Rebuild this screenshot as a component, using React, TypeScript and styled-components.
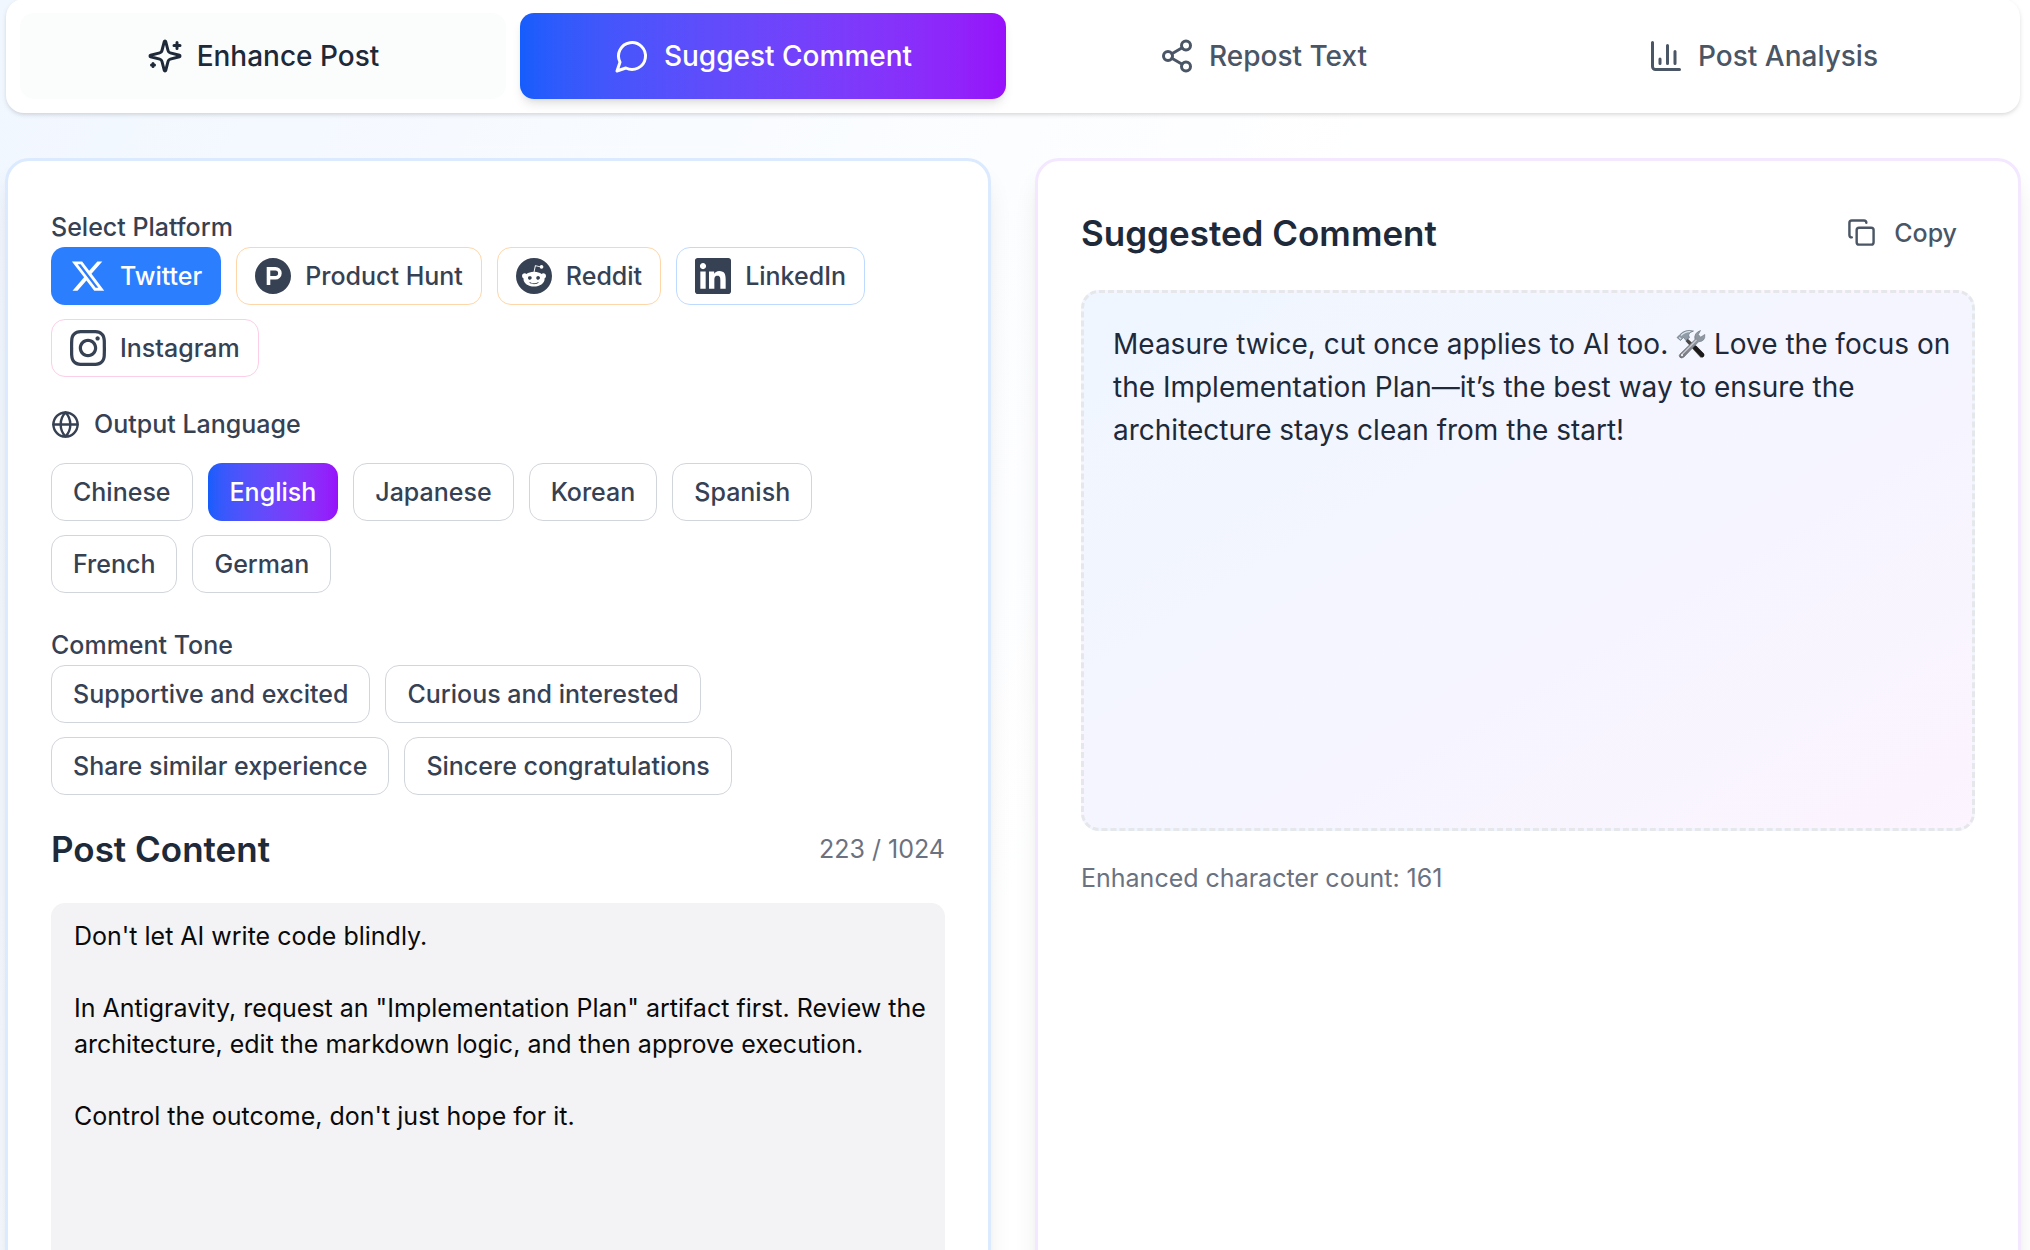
import React, { useState } from "react";
import styled, { createGlobalStyle, css } from "styled-components";

const GlobalStyle = createGlobalStyle`
  *, *::before, *::after { box-sizing: border-box; }
  body {
    margin: 0;
    min-height: 100vh;
    overflow: hidden;
    font-family: Inter, "Liberation Sans", sans-serif;
    -webkit-font-smoothing: antialiased;
    color: #1e2939;
    background: linear-gradient(115deg, #f1f7ff, #ffffff 55%);
  }
  button, textarea { font: inherit; }
`;

const accent = "linear-gradient(to right in oklab, #155dfc, #9810fa)";

const Page = styled.main`
  display: flex;
  flex-direction: column;
  gap: 45px;
  height: 100vh;
  padding: 0 10px 0 6px;
`;

const TabBar = styled.nav`
  display: grid;
  grid-template-columns: repeat(4, 1fr);
  gap: 14px;
  flex: none;
  margin-top: -1px;
  padding: 14px;
  background: #ffffff;
  border-radius: 18px;
  box-shadow: 0 2px 5px rgba(0, 0, 0, 0.1), 0 2px 4px -2px rgba(0, 0, 0, 0.1);
`;

const Tab = styled.button<{ $state: "active" | "hover" | "idle" }>`
  display: flex;
  align-items: center;
  justify-content: center;
  gap: 14px;
  height: 86px;
  padding: 0;
  border: 0;
  border-radius: 14px;
  background: transparent;
  color: #4a5565;
  font-size: 28px;
  font-weight: 500;
  cursor: pointer;
  ${(p) =>
    p.$state === "hover" &&
    css`
      background: #fbfdfd;
      color: #1e2939;
    `}
  ${(p) =>
    p.$state === "active" &&
    css`
      background: ${accent};
      color: #ffffff;
      box-shadow: 0 7px 11px -2px rgba(0, 0, 0, 0.1), 0 4px 7px -4px rgba(0, 0, 0, 0.1);
    `}
`;

const Columns = styled.div`
  display: grid;
  grid-template-columns: repeat(2, minmax(0, 1fr));
  gap: 44px;
  margin: 0 -1px;
`;

const Card = styled.section<{ $edge: string }>`
  display: flex;
  flex-direction: column;
  gap: 29px;
  padding: 43px;
  background: #ffffff;
  border: 3px solid ${(p) => p.$edge};
  border-radius: 24px;
  box-shadow: 0 18px 27px -5px rgba(0, 0, 0, 0.1), 0 7px 11px -7px rgba(0, 0, 0, 0.1);
`;

const Field = styled.div`
  display: flex;
  flex-direction: column;
`;

const FieldLabel = styled.div<{ $spaced?: boolean }>`
  display: flex;
  align-items: center;
  gap: 14px;
  height: ${(p) => (p.$spaced ? "36px" : "43px")};
  margin-bottom: ${(p) => (p.$spaced ? "21px" : "0")};
  padding-top: ${(p) => (p.$spaced ? "0" : "3px")};
  color: #364153;
  font-size: 25px;
  font-weight: 500;
`;

const Choices = styled.div`
  display: flex;
  flex-wrap: wrap;
  gap: 14px 15px;
`;

const Choice = styled.button<{ $edge?: string; $fill?: string; $icon?: boolean }>`
  display: flex;
  align-items: center;
  gap: ${(p) => (p.$icon ? "14px" : "0")};
  height: 58px;
  padding: 0 ${(p) => (p.$icon ? "18px" : "21px")};
  border: 1px solid ${(p) => p.$edge || "#d1d5dc"};
  border-radius: 14px;
  background: #ffffff;
  color: #364153;
  font-size: 25px;
  font-weight: 500;
  white-space: nowrap;
  cursor: pointer;
  ${(p) =>
    p.$fill &&
    css`
      border-color: transparent;
      background: ${p.$fill} border-box;
      color: #ffffff;
    `}
`;

const Header = styled.header<{ $height: number }>`
  display: flex;
  align-items: center;
  justify-content: space-between;
  height: ${(p) => p.$height}px;
`;

const Title = styled.h2`
  margin: 0;
  color: #1e2939;
  font-size: 35px;
  font-weight: 600;
`;

const Muted = styled.span`
  color: #6a7282;
  font-size: 25px;
  line-height: 36px;
`;

const CopyButton = styled.button`
  display: flex;
  align-items: center;
  gap: 18px;
  height: 57px;
  padding: 0 18px;
  border: 0;
  border-radius: 14px;
  background: transparent;
  color: #4a5565;
  font-size: 25px;
  font-weight: 500;
  cursor: pointer;
`;

const PostInput = styled.textarea`
  display: block;
  width: 100%;
  height: 440px;
  padding: 15px 18px 15px 23px;
  border: 0;
  border-radius: 14px;
  outline: 0;
  resize: none;
  background: #f3f3f5;
  color: #0a0a0a;
  font-size: 25px;
  line-height: 36px;
`;

const Result = styled.div`
  min-height: 541px;
  padding: 30px 14px 30px 29px;
  border: 3px dashed #e5e7eb;
  border-radius: 18px;
  background: linear-gradient(to bottom right in oklab, #eff6ff, #f5f5ff 55%, #fcf4ff);
  color: #1e2939;
  font-size: 28px;
  line-height: 43px;

  p { margin: 0; }
`;

const Glyph = styled.svg<{ $size: number }>`
  flex: none;
  width: ${(p) => p.$size}px;
  height: ${(p) => p.$size}px;
`;

const Emoji = styled.svg`
  width: 30px;
  height: 30px;
  vertical-align: -5px;
`;

function Line({ size, children }: { size: number; children: React.ReactNode }) {
  return (
    <Glyph
      $size={size}
      viewBox="0 0 24 24"
      fill="none"
      stroke="currentColor"
      strokeWidth="2"
      strokeLinecap="round"
      strokeLinejoin="round"
      aria-hidden="true"
    >
      {children}
    </Glyph>
  );
}

function Brand({ d }: { d: string }) {
  return (
    <Glyph $size={36} viewBox="0 0 24 24" fill="currentColor" aria-hidden="true">
      <path d={d} />
    </Glyph>
  );
}

function ToolsEmoji() {
  return (
    <Emoji viewBox="0 0 30 30" role="img" aria-label="hammer and wrench">
      <defs>
        <linearGradient id="steel" x1="0" y1="1" x2="1" y2="0">
          <stop offset="0" stopColor="#75727a" />
          <stop offset="0.5" stopColor="#8b8f97" />
          <stop offset="1" stopColor="#93a0ab" />
        </linearGradient>
      </defs>
      <path d="M11.5 9.5 L27.5 24.5 Q29 27 26.5 28.5 L24.5 28.5 L9.5 12 Z" fill="#4a4442" />
      <path d="M19 18.5 L26.3 26" stroke="#1b1919" strokeWidth="4.2" strokeLinecap="round" />
      <path
        d="M4 25 L19 10.5 Q17.5 4 24.5 1.5 L22.3 5.5 L24.6 8.2 L28.8 5.5 Q29.5 12.5 22.5 12.8 L8 28 Q5.5 30 3.8 28.2 Q2.4 26.8 4 25Z"
        fill="url(#steel)"
        stroke="#66707a"
        strokeWidth="0.6"
      />
      <path d="M6 25.5 L20.5 11" stroke="#c9c9d0" strokeWidth="1.2" />
      <circle cx="6" cy="26.2" r="1.1" fill="#f1f2f6" />
      <path
        d="M1 8.5 L4 5.5 Q9 0 17.5 2 Q13 3.5 12.5 6 L13.5 8.5 L10 11.5 L7.5 8.5 L4.5 11.5 Z"
        fill="#8f9ba7"
        stroke="#5e6974"
        strokeWidth="0.6"
      />
      <path d="M5 6.5 Q9.5 2 14.5 2.6 M3.2 8.4 L5 10" stroke="#d7e4ee" strokeWidth="1.3" fill="none" />
    </Emoji>
  );
}

const tabs = [
  {
    name: "Enhance Post",
    icon: (
      <>
        <path d="M9.937 15.5A2 2 0 0 0 8.5 14.063l-6.135-1.582a.5.5 0 0 1 0-.962L8.5 9.936A2 2 0 0 0 9.937 8.5l1.582-6.135a.5.5 0 0 1 .963 0L14.063 8.5A2 2 0 0 0 15.5 9.937l6.135 1.581a.5.5 0 0 1 0 .964L15.5 14.063a2 2 0 0 0-1.437 1.437l-1.582 6.135a.5.5 0 0 1-.963 0z" />
        <path d="M20 3v4M22 5h-4M4 17v2M5 18H3" />
      </>
    ),
  },
  { name: "Suggest Comment", icon: <path d="M7.9 20A9 9 0 1 0 4 16.1L2 22Z" /> },
  {
    name: "Repost Text",
    icon: (
      <>
        <circle cx="18" cy="5" r="3" />
        <circle cx="6" cy="12" r="3" />
        <circle cx="18" cy="19" r="3" />
        <path d="M8.59 13.51l6.83 3.98M15.41 6.51l-6.82 3.98" />
      </>
    ),
  },
  {
    name: "Post Analysis",
    icon: <path d="M3 3v16a2 2 0 0 0 2 2h16M18 17V9M13 17V5M8 17v-3" />,
  },
];

const platforms = [
  {
    name: "Twitter",
    edge: "#2b7fff",
    d: "M18.244 2.25h3.308l-7.227 8.26 8.502 11.24H16.17l-5.214-6.817L4.99 21.75H1.68l7.73-8.835L1.254 2.25H8.08l4.713 6.231zm-1.161 17.52h1.833L7.084 4.126H5.117z",
  },
  {
    name: "Product Hunt",
    edge: "#ffd6a7",
    d: "M13.604 8.4h-3.405V12h3.405a1.8 1.8 0 0 0 0-3.6zM12 0C5.372 0 0 5.372 0 12s5.372 12 12 12 12-5.372 12-12S18.628 0 12 0zm1.604 14.4h-3.405V18H7.801V6h5.804a4.2 4.2 0 0 1 0 8.4z",
  },
  {
    name: "Reddit",
    edge: "#ffd6a7",
    d: "M12 0A12 12 0 0 0 0 12a12 12 0 0 0 12 12 12 12 0 0 0 12-12A12 12 0 0 0 12 0zm5.01 4.744c.688 0 1.25.561 1.25 1.249a1.25 1.25 0 0 1-2.498.056l-2.597-.547-.8 3.747c1.824.07 3.48.632 4.674 1.488.308-.309.73-.491 1.207-.491.968 0 1.754.786 1.754 1.754 0 .716-.435 1.333-1.01 1.614a3.111 3.111 0 0 1 .042.52c0 2.694-3.13 4.87-7.004 4.87-3.874 0-7.004-2.176-7.004-4.87 0-.183.015-.366.043-.534A1.748 1.748 0 0 1 4.028 12c0-.968.786-1.754 1.754-1.754.463 0 .898.196 1.207.49 1.207-.883 2.878-1.43 4.744-1.487l.885-4.182a.342.342 0 0 1 .14-.197.35.35 0 0 1 .238-.042l2.906.617a1.214 1.214 0 0 1 1.108-.701zM9.25 12C8.561 12 8 12.562 8 13.25c0 .687.561 1.248 1.25 1.248.687 0 1.248-.561 1.248-1.249 0-.688-.561-1.249-1.249-1.249zm5.5 0c-.687 0-1.248.561-1.248 1.25 0 .687.561 1.248 1.249 1.248.688 0 1.249-.561 1.249-1.249 0-.687-.562-1.249-1.25-1.249zm-5.466 3.99a.327.327 0 0 0-.231.094.33.33 0 0 0 0 .463c.842.842 2.484.913 2.961.913.477 0 2.105-.056 2.961-.913a.361.361 0 0 0 .029-.463.33.33 0 0 0-.464 0c-.547.533-1.684.73-2.512.73-.828 0-1.979-.196-2.512-.73a.326.326 0 0 0-.232-.095z",
  },
  {
    name: "LinkedIn",
    edge: "#bedbff",
    d: "M20.447 20.452h-3.554v-5.569c0-1.328-.027-3.037-1.852-3.037-1.853 0-2.136 1.445-2.136 2.939v5.667H9.351V9h3.414v1.561h.046c.477-.9 1.637-1.85 3.37-1.85 3.601 0 4.267 2.37 4.267 5.455v6.286zM5.337 7.433c-1.144 0-2.063-.926-2.063-2.065 0-1.138.92-2.063 2.063-2.063 1.14 0 2.064.925 2.064 2.063 0 1.139-.925 2.065-2.064 2.065zm1.782 13.019H3.555V9h3.564v11.452zM22.225 0H1.771C.792 0 0 .774 0 1.729v20.542C0 23.227.792 24 1.771 24h20.451C23.2 24 24 23.227 24 22.271V1.729C24 .774 23.2 0 22.222 0h.003z",
  },
  {
    name: "Instagram",
    edge: "#fccee8",
    d: "M12 2.163c3.204 0 3.584.012 4.85.07 3.252.148 4.771 1.691 4.919 4.919.058 1.265.069 1.645.069 4.849 0 3.205-.012 3.584-.069 4.849-.149 3.225-1.664 4.771-4.919 4.919-1.266.058-1.644.07-4.85.07-3.204 0-3.584-.012-4.849-.07-3.26-.149-4.771-1.699-4.919-4.92-.058-1.265-.07-1.644-.07-4.849 0-3.204.013-3.583.07-4.849.149-3.227 1.664-4.771 4.919-4.919 1.266-.057 1.645-.069 4.849-.069zm0-2.163c-3.259 0-3.667.014-4.947.072-4.358.2-6.78 2.618-6.98 6.98-.059 1.281-.073 1.689-.073 4.948 0 3.259.014 3.668.072 4.948.2 4.358 2.618 6.78 6.98 6.98 1.281.058 1.689.072 4.948.072 3.259 0 3.668-.014 4.948-.072 4.354-.2 6.782-2.618 6.979-6.98.059-1.28.073-1.689.073-4.948 0-3.259-.014-3.667-.072-4.947-.196-4.354-2.617-6.78-6.979-6.98-1.281-.059-1.69-.073-4.949-.073zm0 5.838c-3.403 0-6.162 2.759-6.162 6.162s2.759 6.163 6.162 6.163 6.162-2.759 6.162-6.163c0-3.403-2.759-6.162-6.162-6.162zm0 10.162c-2.209 0-4-1.79-4-4 0-2.209 1.791-4 4-4s4 1.791 4 4c0 2.21-1.791 4-4 4zm6.406-11.845c-.796 0-1.441.645-1.441 1.44s.645 1.44 1.441 1.44c.795 0 1.439-.645 1.439-1.44s-.644-1.44-1.439-1.44z",
  },
];

const languages = ["Chinese", "English", "Japanese", "Korean", "Spanish", "French", "German"];

const tones = [
  "Supportive and excited",
  "Curious and interested",
  "Share similar experience",
  "Sincere congratulations",
];

const initialPost = `Don't let AI write code blindly.

In Antigravity, request an "Implementation Plan" artifact first. Review the architecture, edit the markdown logic, and then approve execution.

Control the outcome, don't just hope for it.`;

export default function App() {
  const [tab, setTab] = useState("Suggest Comment");
  const [platform, setPlatform] = useState("Twitter");
  const [language, setLanguage] = useState("English");
  const [tone, setTone] = useState("");
  const [post, setPost] = useState(initialPost);

  return (
    <>
      <GlobalStyle />
      <Page>
        <TabBar>
          {tabs.map((t, i) => (
            <Tab
              key={t.name}
              type="button"
              $state={t.name === tab ? "active" : i === 0 ? "hover" : "idle"}
              onClick={() => setTab(t.name)}
            >
              <Line size={36}>{t.icon}</Line>
              {t.name}
            </Tab>
          ))}
        </TabBar>

        <Columns>
          <Card $edge="#dbeafe">
            <Field role="group" aria-labelledby="platform-label">
              <FieldLabel id="platform-label">Select Platform</FieldLabel>
              <Choices>
                {platforms.map((p) => (
                  <Choice
                    key={p.name}
                    type="button"
                    $icon
                    $edge={p.edge}
                    $fill={p.name === platform ? "#2b7fff" : undefined}
                    aria-pressed={p.name === platform}
                    onClick={() => setPlatform(p.name)}
                  >
                    <Brand d={p.d} />
                    {p.name}
                  </Choice>
                ))}
              </Choices>
            </Field>

            <Field role="group" aria-labelledby="language-label">
              <FieldLabel id="language-label" $spaced>
                <Line size={29}>
                  <circle cx="12" cy="12" r="10" />
                  <path d="M12 2a14.5 14.5 0 0 0 0 20 14.5 14.5 0 0 0 0-20M2 12h20" />
                </Line>
                Output Language
              </FieldLabel>
              <Choices>
                {languages.map((l) => (
                  <Choice
                    key={l}
                    type="button"
                    $fill={l === language ? accent : undefined}
                    aria-pressed={l === language}
                    onClick={() => setLanguage(l)}
                  >
                    {l}
                  </Choice>
                ))}
              </Choices>
            </Field>

            <Field role="group" aria-labelledby="tone-label">
              <FieldLabel id="tone-label">Comment Tone</FieldLabel>
              <Choices>
                {tones.map((t) => (
                  <Choice
                    key={t}
                    type="button"
                    $fill={t === tone ? accent : undefined}
                    aria-pressed={t === tone}
                    onClick={() => setTone(t)}
                  >
                    {t}
                  </Choice>
                ))}
              </Choices>
            </Field>

            <Header $height={50}>
              <Title id="post-title">Post Content</Title>
              <Muted>223 / 1024</Muted>
            </Header>
            <PostInput
              aria-labelledby="post-title"
              maxLength={1024}
              value={post}
              onChange={(e) => setPost(e.target.value)}
            />
          </Card>

          <Card $edge="#f3e8ff">
            <Header $height={57}>
              <Title>Suggested Comment</Title>
              <CopyButton type="button">
                <Line size={29}>
                  <rect width="14" height="14" x="8" y="8" rx="2" />
                  <path d="M4 16c-1.1 0-2-.9-2-2V4c0-1.1.9-2 2-2h10c1.1 0 2 .9 2 2" />
                </Line>
                Copy
              </CopyButton>
            </Header>
            <Result>
              <p>
                Measure twice, cut once applies to AI too. <ToolsEmoji /> Love the focus on the
                Implementation Plan—it’s the best way to ensure the architecture stays clean from
                the start!
              </p>
            </Result>
            <Muted>Enhanced character count: 161</Muted>
          </Card>
        </Columns>
      </Page>
    </>
  );
}
